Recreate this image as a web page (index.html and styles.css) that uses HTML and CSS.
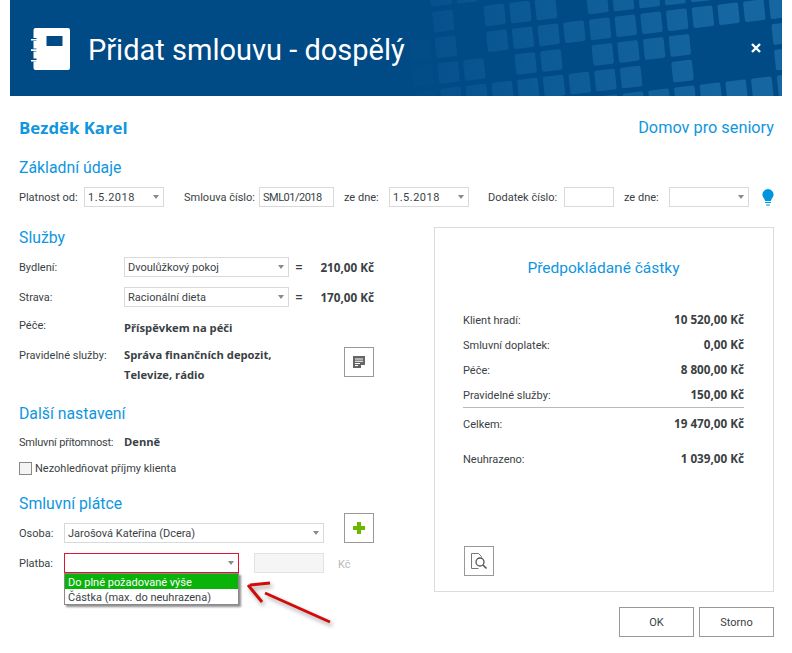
FILE: index.html
```html
<!DOCTYPE html>
<html lang="cs">
<head>
<meta charset="utf-8">
<title>Přidat smlouvu - dospělý</title>
<link rel="stylesheet" href="styles.css">
</head>
<body>
<div class="app">
  <header class="hdr">
    <svg class="hdr-bg" width="772" height="96" viewBox="0 0 772 96" aria-hidden="true">
      <defs><linearGradient id="sq" gradientUnits="userSpaceOnUse" x1="-3" y1="0" x2="9" y2="0"><stop offset="0" stop-color="#06508c"/><stop offset=".45" stop-color="#0d5c98"/><stop offset="1" stop-color="#1666a2"/></linearGradient></defs>
      <g transform="matrix(25.7 -3 2.67 25.7 487.3 40.7)" fill="url(#sq)">
        <rect x="-2.4" y="-2.4" width=".8" height=".8" rx=".08"/><rect x="-1.4" y="-2.4" width=".8" height=".8" rx=".08"/>
        <rect x="-2.4" y="-1.4" width=".8" height=".8" rx=".08"/><rect x="-.4" y="-1.4" width=".8" height=".8" rx=".08"/><rect x=".6" y="-1.4" width=".8" height=".8" rx=".08"/><rect x="1.6" y="-1.4" width=".8" height=".8" rx=".08"/><rect x="3.6" y="-1.4" width=".8" height=".8" rx=".08"/><rect x="4.6" y="-1.4" width=".8" height=".8" rx=".08"/><rect x="5.6" y="-1.4" width=".8" height=".8" rx=".08"/><rect x="6.6" y="-1.4" width=".8" height=".8" rx=".08"/><rect x="7.6" y="-1.4" width=".8" height=".8" rx=".08"/>
        <rect x="-3.4" y="-.4" width=".8" height=".8" rx=".08" opacity=".3"/><rect x="-2.4" y="-.4" width=".8" height=".8" rx=".08"/><rect x="-.4" y="-.4" width=".8" height=".8" rx=".08"/><rect x=".6" y="-.4" width=".8" height=".8" rx=".08"/><rect x="1.6" y="-.4" width=".8" height=".8" rx=".08"/><rect x="2.6" y="-.4" width=".8" height=".8" rx=".08"/><rect x="3.6" y="-.4" width=".8" height=".8" rx=".08"/><rect x="4.6" y="-.4" width=".8" height=".8" rx=".08"/><rect x="5.6" y="-.4" width=".8" height=".8" rx=".08"/><rect x="6.6" y="-.4" width=".8" height=".8" rx=".08"/><rect x="7.6" y="-.4" width=".8" height=".8" rx=".08"/><rect x="8.6" y="-.4" width=".8" height=".8" rx=".08"/><rect x="9.6" y="-.4" width=".8" height=".8" rx=".08"/><rect x="10.6" y="-.4" width=".8" height=".8" rx=".08"/>
        <rect x="-3.4" y=".6" width=".8" height=".8" rx=".08" opacity=".3"/><rect x="-2.4" y=".6" width=".8" height=".8" rx=".08"/><rect x="-1.4" y=".6" width=".8" height=".8" rx=".08"/><rect x=".6" y=".6" width=".8" height=".8" rx=".08"/><rect x="1.6" y=".6" width=".8" height=".8" rx=".08"/><rect x="3.6" y=".6" width=".8" height=".8" rx=".08"/><rect x="4.6" y=".6" width=".8" height=".8" rx=".08"/><rect x="5.6" y=".6" width=".8" height=".8" rx=".08"/><rect x="6.6" y=".6" width=".8" height=".8" rx=".08"/><rect x="10.6" y=".6" width=".8" height=".8" rx=".08"/>
        <rect x="-3.4" y="1.6" width=".8" height=".8" rx=".08" opacity=".3"/><rect x="-2.4" y="1.6" width=".8" height=".8" rx=".08"/><rect x="-1.4" y="1.6" width=".8" height=".8" rx=".08"/><rect x="-.4" y="1.6" width=".8" height=".8" rx=".08"/><rect x=".6" y="1.6" width=".8" height=".8" rx=".08"/><rect x="1.6" y="1.6" width=".8" height=".8" rx=".08"/><rect x="2.6" y="1.6" width=".8" height=".8" rx=".08"/><rect x="3.6" y="1.6" width=".8" height=".8" rx=".08"/><rect x="4.6" y="1.6" width=".8" height=".8" rx=".08"/><rect x="6.6" y="1.6" width=".8" height=".8" rx=".08"/><rect x="10.6" y="1.6" width=".8" height=".8" rx=".08"/>
        <rect x="3.6" y="2.6" width=".8" height=".8" rx=".08"/><rect x="4.6" y="2.6" width=".8" height=".8" rx=".08"/><rect x="5.6" y="2.6" width=".8" height=".8" rx=".08"/><rect x="6.6" y="2.6" width=".8" height=".8" rx=".08"/><rect x="7.6" y="2.6" width=".8" height=".8" rx=".08"/><rect x="8.6" y="2.6" width=".8" height=".8" rx=".08"/><rect x="9.6" y="2.6" width=".8" height=".8" rx=".08"/><rect x="10.6" y="2.6" width=".8" height=".8" rx=".08"/>
      </g>
    </svg>
    <svg class="hdr-icon" width="40" height="42" viewBox="0 0 40 42" aria-hidden="true">
      <path fill="#fff" fill-rule="evenodd" d="M4.500 0H37a2 2 0 0 1 2 2v38a2 2 0 0 1-2 2H4.500a2 2 0 0 1-2-2v-6.500H5.500v-3H2.500v-7H5.500v-3H2.500v-7.500H5.500v-3H2.500V2a2 2 0 0 1 2-2ZM15.500 8v10h16V8Z"/>
      <path fill="#fff" d="M0 11h7v1.600H0ZM0 21.300h7v1.600H0ZM0 32h7v1.600H0Z"/>
    </svg>
    <h1 class="hdr-title">Přidat smlouvu - dospělý</h1>
    <svg class="hdr-close" width="10" height="10" viewBox="0 0 10 10" aria-hidden="true"><path d="M1 1l8 8M9 1l-8 8" stroke="#fff" stroke-width="2.400" fill="none"/></svg>
  </header>

  <main class="body">
    <div class="top">
      <strong class="client">Bezděk Karel</strong>
      <span class="facility">Domov pro seniory</span>
    </div>

    <h2 class="sec sec-basic">Základní údaje</h2>
    <div class="fields">
      <span class="lbl">Platnost od:</span>
      <div class="sel w80 f-a date">1.5.2018<i class="caret"></i></div>
      <span class="lbl f-b">Smlouva číslo:</span>
      <div class="inp w75 f-c code">SML01/2018</div>
      <span class="lbl f-d">ze dne:</span>
      <div class="sel w80 f-e date">1.5.2018<i class="caret"></i></div>
      <span class="lbl f-f">Dodatek číslo:</span>
      <div class="inp w50 f-g"></div>
      <span class="lbl f-h">ze dne:</span>
      <div class="sel w80 f-i"><i class="caret"></i></div>
      <svg class="bulb" width="12" height="17" viewBox="0 0 12 17" aria-hidden="true">
        <path fill="#0095e0" d="M6 0a5.600 5.600 0 0 1 5.600 5.600c0 2.400-1.500 3.500-2.300 5.200-.2.400-.3.700-.3 1.200H3c0-.5-.1-.8-.3-1.200C1.900 9.100.4 8 .4 5.600A5.600 5.600 0 0 1 6 0Z"/>
        <path fill="#0095e0" d="M3 13h6v1H3ZM4 15.500h4v1H4Z"/>
      </svg>
    </div>

    <div class="cols">
      <section class="left">
        <h2 class="sec sec-svc">Služby</h2>
        <div class="row row-a">
          <span class="lbl col-l">Bydlení:</span>
          <div class="sel w165">Dvoulůžkový pokoj<i class="caret"></i></div>
          <span class="eq">=</span>
          <b class="val price">210,00 Kč</b>
        </div>
        <div class="row row-b">
          <span class="lbl col-l">Strava:</span>
          <div class="sel w165">Racionální dieta<i class="caret"></i></div>
          <span class="eq">=</span>
          <b class="val price">170,00 Kč</b>
        </div>
        <div class="row row-c">
          <span class="lbl col-l">Péče:</span>
          <b class="val low">Příspěvkem na péči</b>
        </div>
        <div class="row row-d">
          <span class="lbl col-l">Pravidelné služby:</span>
          <b class="val lines">Správa finančních depozit,<br>Televize, rádio</b>
          <button class="icon-btn list-btn" type="button" aria-label="Seznam">
            <svg width="14" height="14" viewBox="0 0 14 14"><path fill="#666" d="M1 1h12v8.500L9 13H1Z"/><path fill="#fff" d="M3 3.500h8v1H3ZM3 5.700h8v1H3ZM3 7.900h5v1H3ZM3 10.100h3v1H3ZM9 10h4v.6l-3.400 3H9Z"/></svg>
          </button>
        </div>

        <h2 class="sec sec-more">Další nastavení</h2>
        <div class="row row-e">
          <span class="lbl col-l tight">Smluvní přítomnost:</span>
          <b class="val">Denně</b>
        </div>
        <label class="check">
          <i class="box"></i>
          <span class="lbl">Nezohledňovat příjmy klienta</span>
        </label>

        <h2 class="sec sec-payer">Smluvní plátce</h2>
        <div class="row row-f">
          <span class="lbl col-s">Osoba:</span>
          <div class="sel w260">Jarošová Kateřina (Dcera)<i class="caret"></i></div>
          <button class="icon-btn plus-btn" type="button" aria-label="Přidat">
            <svg width="12" height="12" viewBox="0 0 12 12"><path fill="#6cb800" d="M4 0h4v4h4v4H8v4H4V8H0V4h4Z"/></svg>
          </button>
        </div>
        <div class="row row-g">
          <span class="lbl col-s">Platba:</span>
          <div class="sel w175 err"><i class="caret"></i>
            <ul class="drop">
              <li class="on">Do plné požadované výše</li>
              <li>Částka (max. do neuhrazena)</li>
            </ul>
          </div>
          <div class="inp w70 off"></div>
          <span class="unit">Kč</span>
        </div>
      </section>

      <aside class="panel">
        <h2 class="sec panel-title">Předpokládané částky</h2>
        <dl class="sums">
          <div class="sum"><dt>Klient hradí:</dt><dd>10 520,00 Kč</dd></div>
          <div class="sum"><dt>Smluvní doplatek:</dt><dd>0,00 Kč</dd></div>
          <div class="sum"><dt>Péče:</dt><dd>8 800,00 Kč</dd></div>
          <div class="sum"><dt>Pravidelné služby:</dt><dd>150,00 Kč</dd></div>
          <div class="sum total"><dt>Celkem:</dt><dd>19 470,00 Kč</dd></div>
          <div class="sum rest"><dt>Neuhrazeno:</dt><dd>1 039,00 Kč</dd></div>
        </dl>
        <button class="icon-btn find-btn" type="button" aria-label="Náhled">
          <svg width="18" height="17" viewBox="0 0 18 17" fill="none"><path stroke="#777" d="M1.500 15.500V.5h7l3 3v1M1.500 15.500h7"/><circle cx="10" cy="9" r="4" stroke="#555" stroke-width="1.300"/><path stroke="#555" stroke-width="1.600" d="M13 12l3.500 3.500"/></svg>
        </button>
      </aside>
    </div>

    <footer class="foot">
      <button class="btn" type="button">OK</button>
      <button class="btn" type="button">Storno</button>
    </footer>
  </main>

  <svg class="arrow" width="105" height="60" viewBox="0 0 105 60" aria-hidden="true">
    <path d="M33 6L13 8M11 8L25 25M28 16L93 45" fill="none" stroke="#d20a0a" stroke-width="3"/>
  </svg>
</div>
</body>
</html>
```

FILE: styles.css
```css
* { box-sizing: border-box; }
html, body { margin: 0; padding: 0; background: #fff; }
body { font-family: Roboto, "Open Sans", sans-serif; font-size: 11px; color: #3a3f45; }
h1, h2, ul, dl, dd { margin: 0; padding: 0; }

.app { position: relative; width: 772px; height: 653px; margin-left: 10px; overflow: visible; }

.hdr { position: relative; height: 96px; background: #004a85; display: flex; align-items: center; overflow: hidden; }
.hdr-bg { position: absolute; left: 0; top: 0; }
.hdr-icon { position: relative; margin-left: 21px; margin-top: 1px; }
.hdr-title { position: relative; margin-left: 17px; margin-top: 3px; font-weight: 400; font-size: 29px; line-height: 40px; color: #fff; white-space: nowrap; }
.hdr-close { position: absolute; left: 741px; top: 43px; }

.body { padding: 20px 8px 0 9px; }
.top { display: flex; justify-content: space-between; align-items: center; height: 22px; }
.client { font-family: "Open Sans", sans-serif; font-size: 16.800px; font-weight: 700; color: #0f96e0; }
.facility { font-size: 16.300px; color: #0f96e0; }

.sec { font-size: 15.800px; line-height: 20px; padding-top: 2px; font-weight: 400; color: #0f96e0; }
.sec-basic { margin-top: 18px; }

.lbl { white-space: nowrap; line-height: 18px; padding-top: 2px; }
.tight { letter-spacing: -.2px; }
.sel, .inp { position: relative; height: 20px; line-height: 20px; border: 1px solid #d9d9d9; padding-left: 3px; background: #fff; white-space: nowrap; }
.date { letter-spacing: .5px; }
.code { letter-spacing: -.5px; }
.caret { position: absolute; right: 4px; top: 7px; width: 0; height: 0; border-style: solid; border-width: 4px 3.500px 0; border-color: #8a8a8a transparent transparent; }
.w50 { width: 50px; } .w70 { width: 70px; } .w75 { width: 75px; } .w80 { width: 80px; }
.w165 { width: 165px; } .w175 { width: 175px; } .w260 { width: 260px; }

.fields { display: grid; grid-template-columns: 65px 80px 20px 75px 75px 10px 45px 80px 19px 76px 50px 10px 45px 80px 13px 12px; height: 20px; margin-top: 9px; align-items: center; }
.f-a { grid-column: 2; }
.f-b { grid-column: 3 / span 2; margin-left: 20px; }
.f-c { grid-column: 5; }
.f-d { grid-column: 7; }
.f-e { grid-column: 8; }
.f-f { grid-column: 9 / span 2; margin-left: 19px; }
.f-g { grid-column: 11; }
.f-h { grid-column: 13; }
.f-i { grid-column: 14; }
.bulb { grid-column: 16; }

.cols { display: grid; grid-template-columns: 355px 340px; column-gap: 60px; margin-top: 20px; }
.sec-svc { margin-top: -1px; }
.row { display: flex; align-items: center; }
.col-l { width: 105px; flex: none; }
.col-s { width: 45px; flex: none; }
.val { font-family: "Open Sans", sans-serif; font-size: 11.200px; font-weight: 700; line-height: 20px; white-space: nowrap; }
.eq { width: 13px; margin-left: 6px; flex: none; font-size: 14px; font-weight: 500; }
.price { margin-left: auto; font-size: 11.700px; }
.row-a { margin-top: 9px; }
.row-b { margin-top: 10px; }
.row-c { margin-top: 8px; align-items: flex-start; }
.low { padding-top: 3px; }
.row-d { margin-top: 7px; align-items: flex-start; }
.icon-btn { display: flex; align-items: center; justify-content: center; flex: none; width: 30px; height: 30px; padding: 0; border: 1px solid #999; background: #fff; }
.list-btn { margin-left: auto; margin-top: 2px; }
.sec-more { margin-top: 17px; }
.row-e { margin-top: 8px; }
.check { display: flex; align-items: center; margin-top: 6px; }
.box { width: 13px; height: 13px; border: 1px solid #888; background: #f4f4f4; margin-right: 3px; }
.sec-payer { margin-top: 14px; }
.row-f { margin-top: -1px; align-items: flex-end; }
.plus-btn { margin-left: auto; }
.row-g { margin-top: 10px; }
.err { border-color: #e2132f; }
.drop { position: absolute; left: -1px; top: 19px; width: 175px; height: 32px; list-style: none; border: 1px solid #8a8a8a; background: #fff; box-shadow: 2px 2px 2px #8f8f8f; z-index: 2; color: #3a3f45; }
.drop li { height: 15px; line-height: 17px; padding-left: 3px; }
.drop .on { background: #0ab30a; color: #fff; }
.off { margin-left: 15px; background: #f5f5f5; border-color: #e2e2e2; }
.unit { margin-left: 14px; color: #b9b9b9; padding-top: 2px; }

.panel { display: flex; flex-direction: column; height: 365px; border: 1px solid #dcdcdc; padding: 28px 29px 15px 28px; }
.panel-title { text-align: center; font-size: 15.500px; }
.sums { margin-top: 29px; }
.sum { display: flex; justify-content: space-between; align-items: center; height: 25px; }
.sum dt { padding-top: 2px; }
.sum dd { font-family: "Open Sans", sans-serif; font-size: 11.700px; font-weight: 700; padding-bottom: 2px; }
.total { height: 25px; margin-top: 4px; position: relative; }
.total::before { content: ""; position: absolute; left: 0; right: 0; top: -4px; height: 1px; background: #b9b9b9; }
.rest { margin-top: 10px; }
.find-btn { margin-top: auto; margin-left: 1px; }

.foot { display: flex; justify-content: flex-end; gap: 5px; margin-top: 15px; }
.btn { width: 75px; height: 30px; border: 1px solid #999; background: #fff; font: inherit; color: #3a3f45; padding: 1px 0 0; }

.arrow { position: absolute; left: 227px; top: 577px; filter: drop-shadow(2px 3px 2px rgba(0,0,0,.35)); }
```
